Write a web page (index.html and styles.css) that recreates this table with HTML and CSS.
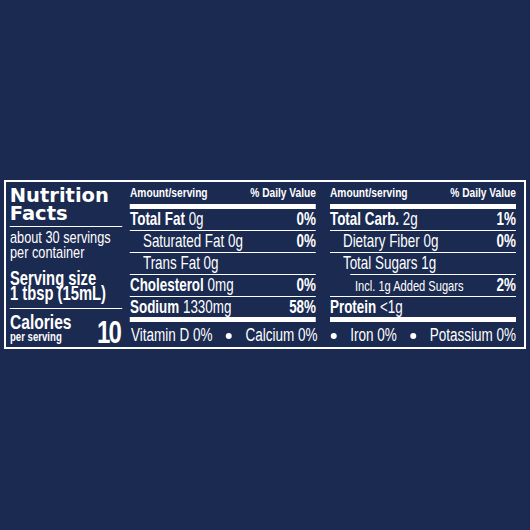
FILE: index.html
```html
<!DOCTYPE html>
<html lang="en">
<head>
    <meta charset="UTF-8">
    <title>Nutrition Facts</title>
    <link rel="stylesheet" href="styles.css">
</head>
<body>

    <div class="label">
        <!-- no condensed face installed: the whole inside is squeezed horizontally -->
        <div class="inner">
            <div class="facts">
                <h1 class="title"><span>Nutrition<br>Facts</span></h1>
                <div class="servings">about 30 servings<br>per container</div>
                <div class="size">Serving size<br>1 tbsp (15mL)</div>
                <div class="calories">
                    <div class="cal-text">
                        <div class="cal-name">Calories</div>
                        <div class="cal-per">per serving</div>
                    </div>
                    <div class="cal-num">10</div>
                </div>
            </div>

            <div class="panel">
                <div class="cols">
                    <div class="col">
                        <div class="col-head"><span>Amount/serving</span><span>% Daily Value</span></div>
                        <div class="row"><span><b>Total Fat</b> 0g</span><b>0%</b></div>
                        <div class="row sub"><span>Saturated Fat 0g</span><b>0%</b></div>
                        <div class="row sub"><span>Trans Fat 0g</span></div>
                        <div class="row"><span><b>Cholesterol</b> 0mg</span><b>0%</b></div>
                        <div class="row last"><span><b>Sodium</b> 1330mg</span><b>58%</b></div>
                    </div>
                    <div class="col">
                        <div class="col-head"><span>Amount/serving</span><span>% Daily Value</span></div>
                        <div class="row"><span><b>Total Carb.</b> 2g</span><b>1%</b></div>
                        <div class="row sub"><span>Dietary Fiber 0g</span><b>0%</b></div>
                        <div class="row sub sugars"><span>Total Sugars 1g</span></div>
                        <div class="row added"><span class="small">Incl. 1g Added Sugars</span><b>2%</b></div>
                        <div class="row last"><span><b>Protein</b> &lt;1g</span></div>
                    </div>
                </div>
                <div class="vitamins">
                    <span>Vitamin D 0%</span><span class="dot"></span>
                    <span>Calcium 0%</span><span class="dot"></span>
                    <span>Iron 0%</span><span class="dot"></span>
                    <span>Potassium 0%</span>
                </div>
            </div>
        </div>
    </div>

</body>
</html>
```

FILE: styles.css
```css
body {
    margin: 0;
    background-color: #1b2a50;
    color: white;
    font-family: "Liberation Sans", Arial, sans-serif;
}
.label {
    box-sizing: border-box;
    width: 522px;
    margin: 180px 0 0 4px;
    border: 2px solid white;
}
/* 518px visible, drawn at 0.75 width */
.inner {
    box-sizing: border-box;
    width: 690.67px;
    padding: 0 10.67px 0 5.33px;
    display: flex;
    gap: 10.67px;
    transform: scaleX(0.75);
    transform-origin: 0 0;
}
.facts {
    width: 149.33px;
    flex-shrink: 0;
    display: flex;
    flex-direction: column;
}
.title {
    margin: 0;
    padding: 4.5px 0 3px;
    font-family: "DejaVu Sans", sans-serif;
    font-weight: bold;
    font-size: 19.5px;
    line-height: 18px;
    border-bottom: 1px solid white;
}
.title span {
    display: inline-block;
    transform: scaleX(1.3333);
    transform-origin: 0 0;
}
.servings {
    padding-top: 4.5px;
    font-size: 17px;
    line-height: 14.5px;
}
.size {
    margin-top: 10.5px;
    padding-bottom: 6px;
    font-weight: bold;
    font-size: 19.7px;
    line-height: 15.5px;
    border-bottom: 1px solid white;
}
.calories {
    flex: 1;
    display: flex;
    justify-content: space-between;
    padding-right: 2.5px;
}
.cal-text {
    padding-top: 3px;
    font-weight: bold;
}
.cal-name {
    font-size: 20.8px;
    line-height: 19px;
}
.cal-per {
    font-size: 12.8px;
    line-height: 12px;
}
.cal-num {
    align-self: flex-end;
    font-weight: bold;
    font-size: 32px;
    line-height: 29px;
    letter-spacing: -2.4px;
}
.panel {
    flex: 1;
}
.cols {
    display: grid;
    grid-template-columns: 248px 248px;
    gap: 18.67px;
}
.col-head {
    display: flex;
    justify-content: space-between;
    font-weight: bold;
    font-size: 13.6px;
    line-height: 22px;
    border-bottom: 5px solid white;
}
.row {
    display: flex;
    justify-content: space-between;
    align-items: baseline;
    font-size: 17.9px;
    line-height: 21px;
    border-bottom: 1px solid white;
}
.row.sub {
    padding-left: 17.3px;
}
.row.sugars {
    border-bottom: none;
}
.row.added {
    padding: 1px 0 0 33.3px;
    line-height: 20px;
    background: linear-gradient(white, white) 26.7px 0 / calc(100% - 26.7px) 1px no-repeat;
}
.small {
    font-size: 14.8px;
}
.row.last {
    line-height: 20px;
    border-bottom: 5px solid white;
}
.vitamins {
    display: flex;
    justify-content: space-between;
    align-items: center;
    padding: 2px 0 0 1.33px;
    font-size: 18px;
    line-height: 23px;
}
.dot {
    width: 8px;
    height: 6px;
    border-radius: 50%;
    background: white;
}
```
